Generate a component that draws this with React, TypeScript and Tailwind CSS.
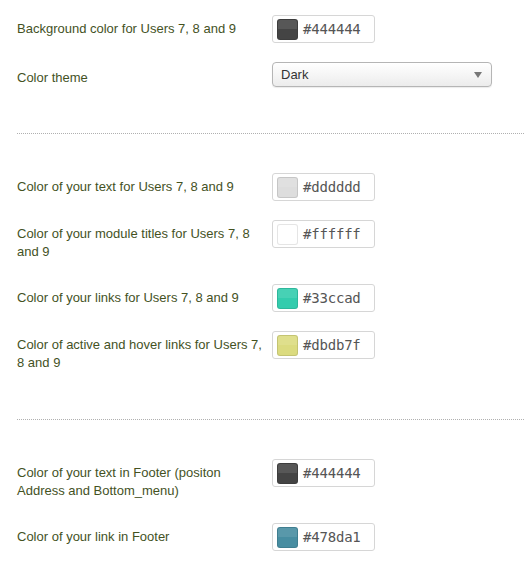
import React from "react";

type ColorRow = {
    label: string;
    value: string;
    swatch: string;
};

const sectionTwo: ColorRow[] = [
    { label: "Color of your text for Users 7, 8 and 9", value: "#dddddd", swatch: "bg-[#dddddd]" },
    { label: "Color of your module titles for Users 7, 8 and 9", value: "#ffffff", swatch: "bg-[#ffffff]" },
    { label: "Color of your links for Users 7, 8 and 9", value: "#33ccad", swatch: "bg-[#33ccad]" },
    { label: "Color of active and hover links for Users 7, 8 and 9", value: "#dbdb7f", swatch: "bg-[#dbdb7f]" },
];

const footerRows: ColorRow[] = [
    { label: "Color of your text in Footer (positon Address and Bottom_menu)", value: "#444444", swatch: "bg-[#444444]" },
    { label: "Color of your link in Footer", value: "#478da1", swatch: "bg-[#478da1]" },
];

function Label({ children, className = "" }: { children: React.ReactNode; className?: string }) {
    return (
        <div className={`w-[255px] shrink-0 pt-[5px] pr-1 text-[13px] leading-[18px] text-[#44521f] ${className}`}>
            {children}
        </div>
    );
}

function ColorInput({ value, swatch }: { value: string; swatch: string }) {
    return (
        <div className="flex h-[28px] w-[103px] shrink-0 items-center rounded-[3px] border border-[#d6d6d6] bg-white pl-[4px]">
            <div
                className={`relative h-[21px] w-[21px] overflow-hidden rounded-[3px] border border-black/10 ${swatch}`}
            >
                <div className="absolute inset-x-0 top-0 h-1/2 bg-white/10" />
            </div>
            <span className="ml-[5px] font-['DejaVu_Sans_Mono',monospace] text-[14px] tracking-[-0.2px] text-[#555]">
                {value}
            </span>
        </div>
    );
}

function Row({ row }: { row: ColorRow }) {
    return (
        <div className="mb-[19px] flex items-start">
            <Label className="pb-[4px]">{row.label}</Label>
            <ColorInput value={row.value} swatch={row.swatch} />
        </div>
    );
}

// row margin collapses into this one, so it carries the full gap
function Divider() {
    return <div className="mt-[43px] mb-[39px] border-t border-dotted border-[#b0b0b0]" />;
}

export default function App() {
    return (
        <div className="min-h-[583px] overflow-hidden bg-white pl-[17px] pt-[15px] font-['Liberation_Sans',Arial,sans-serif]">
            <Row row={{ label: "Background color for Users 7, 8 and 9", value: "#444444", swatch: "bg-[#444444]" }} />

            <div className="mb-[19px] flex h-[28px] items-start">
                <Label className="pt-[7px]">Color theme</Label>
                <div className="flex h-[25px] w-[220px] items-center justify-between rounded-[4px] border border-[#b5b5b5] bg-gradient-to-b from-white to-[#ececec] pl-[8px] pr-[9px] shadow-[0_1px_1px_rgba(0,0,0,0.08)]">
                    <span className="text-[13px] text-[#333]">Dark</span>
                    <svg width="8" height="6" viewBox="0 0 8 6">
                        <path d="M0 0 H8 L4 6 Z" fill="#777" />
                    </svg>
                </div>
            </div>

            <Divider />

            {sectionTwo.map((row) => (
                <Row key={row.label} row={row} />
            ))}

            <Divider />

            {footerRows.map((row) => (
                <Row key={row.label} row={row} />
            ))}
        </div>
    );
}
